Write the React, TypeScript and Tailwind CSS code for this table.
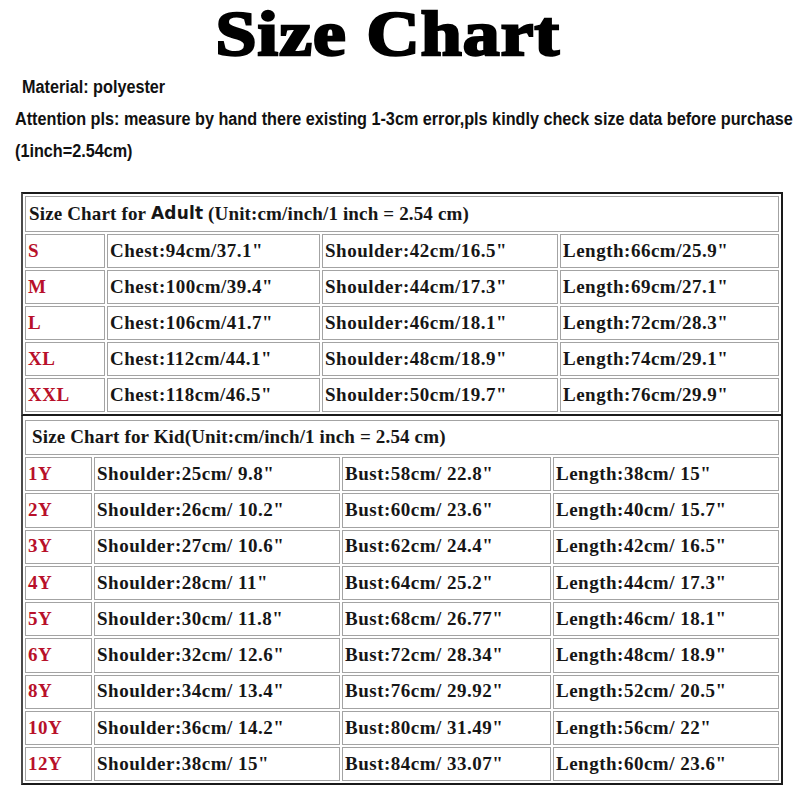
const serif = "font-['Liberation_Serif','Times_New_Roman',serif]"

const adultRows = [
  ["S", "Chest:94cm/37.1\"", "Shoulder:42cm/16.5\"", "Length:66cm/25.9\""],
  ["M", "Chest:100cm/39.4\"", "Shoulder:44cm/17.3\"", "Length:69cm/27.1\""],
  ["L", "Chest:106cm/41.7\"", "Shoulder:46cm/18.1\"", "Length:72cm/28.3\""],
  ["XL", "Chest:112cm/44.1\"", "Shoulder:48cm/18.9\"", "Length:74cm/29.1\""],
  ["XXL", "Chest:118cm/46.5\"", "Shoulder:50cm/19.7\"", "Length:76cm/29.9\""],
]

const kidRows = [
  ["1Y", "Shoulder:25cm/ 9.8\"", "Bust:58cm/ 22.8\"", "Length:38cm/ 15\""],
  ["2Y", "Shoulder:26cm/ 10.2\"", "Bust:60cm/ 23.6\"", "Length:40cm/ 15.7\""],
  ["3Y", "Shoulder:27cm/ 10.6\"", "Bust:62cm/ 24.4\"", "Length:42cm/ 16.5\""],
  ["4Y", "Shoulder:28cm/ 11\"", "Bust:64cm/ 25.2\"", "Length:44cm/ 17.3\""],
  ["5Y", "Shoulder:30cm/ 11.8\"", "Bust:68cm/ 26.77\"", "Length:46cm/ 18.1\""],
  ["6Y", "Shoulder:32cm/ 12.6\"", "Bust:72cm/ 28.34\"", "Length:48cm/ 18.9\""],
  ["8Y", "Shoulder:34cm/ 13.4\"", "Bust:76cm/ 29.92\"", "Length:52cm/ 20.5\""],
  ["10Y", "Shoulder:36cm/ 14.2\"", "Bust:80cm/ 31.49\"", "Length:56cm/ 22\""],
  ["12Y", "Shoulder:38cm/ 15\"", "Bust:84cm/ 33.07\"", "Length:60cm/ 23.6\""],
]

function Cell({ children, red, kid }: { children: React.ReactNode; red?: boolean; kid?: boolean }) {
  return (
    <div className={`${kid ? "h-[34.25px]" : "h-[34px]"} border border-[#a3a3a3] bg-white flex items-center pl-[2px] whitespace-nowrap tracking-[0.5px] ${red ? "text-[#b8102a]" : "text-[#161616]"}`}>
      {children}
    </div>
  )
}

export default function App() {
  return (
    <div className="w-[800px] h-[800px] bg-white overflow-hidden">
      <div className={`h-[71px] flex items-start justify-center pr-[24px] ${serif}`}>
        <span className="inline-block text-[64px] leading-[68px] font-black text-black scale-x-[1.15] tracking-[1px] [-webkit-text-stroke:2.5px_black]">Size Chart</span>
      </div>

      <div className="font-['Liberation_Sans',sans-serif] font-bold text-[18px] text-[#111] leading-[32px]">
        <p className="pl-[22px] whitespace-nowrap"><span className="inline-block origin-left scale-x-[0.9]">Material: polyester</span></p>
        <p className="pl-[15px] whitespace-nowrap"><span className="inline-block origin-left scale-x-[0.9]">Attention pls: measure by hand there existing 1-3cm error,pls kindly check size data before purchase</span></p>
        <p className="pl-[15px] whitespace-nowrap"><span className="inline-block origin-left scale-x-[0.9]">(1inch=2.54cm)</span></p>
      </div>

      <div className={`mt-[25px] ml-[21px] w-[762px] ${serif} font-bold text-[19px]`}>
        <div className="border-2 border-[#1a1a1a] border-l-[#4a4a4a] p-[2px] flex flex-col gap-[2px]">
          <div className="h-[36px] border border-[#a3a3a3] flex items-center pl-[3px] whitespace-nowrap text-[#161616] tracking-[0.15px]">
            Size Chart for&nbsp;<span className="font-['DejaVu_Sans',sans-serif] font-bold text-[17px]">Adult</span>&nbsp;(Unit:cm/inch/1 inch = 2.54 cm)
          </div>
          {adultRows.map(row => (
            <div key={row[0]} className="grid grid-cols-[80px_213px_236px_219px] gap-[2px]">
              <Cell red>{row[0]}</Cell>
              <Cell>{row[1]}</Cell>
              <Cell>{row[2]}</Cell>
              <Cell>{row[3]}</Cell>
            </div>
          ))}
        </div>

        <div className="border-2 border-t-0 border-[#1a1a1a] border-l-[#4a4a4a] px-[2px] pt-[4px] pb-[2px] flex flex-col gap-[2px]">
          <div className="h-[35px] border border-[#a3a3a3] flex items-center pl-[6px] whitespace-nowrap text-[#161616] tracking-[0.15px]">
            Size Chart for Kid(Unit:cm/inch/1 inch = 2.54 cm)
          </div>
          {kidRows.map(row => (
            <div key={row[0]} className="grid grid-cols-[67px_246px_209px_226px] gap-[2px]">
              <Cell red kid>{row[0]}</Cell>
              <Cell kid>{row[1]}</Cell>
              <Cell kid>{row[2]}</Cell>
              <Cell kid>{row[3]}</Cell>
            </div>
          ))}
        </div>
      </div>
    </div>
  )
}
